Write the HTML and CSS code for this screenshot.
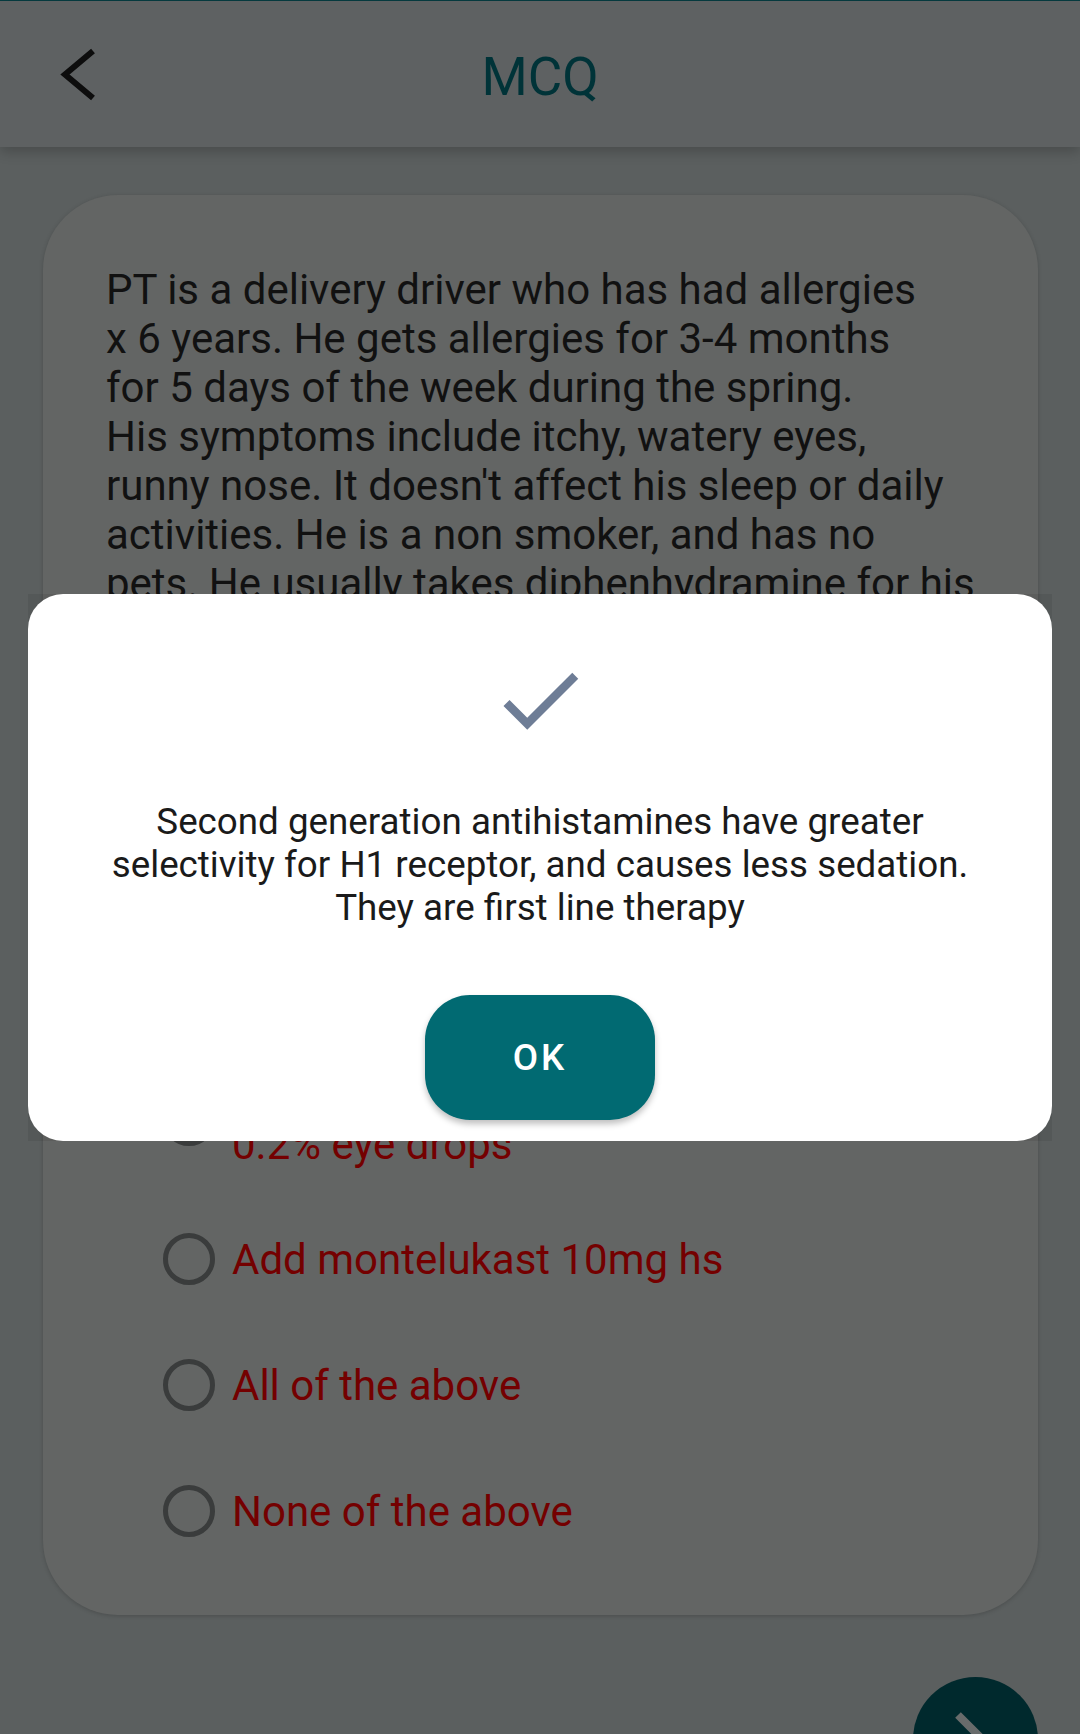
FILE: index.html
```html
<!DOCTYPE html>
<html lang="en">
<head>
<meta charset="utf-8">
<title>MCQ</title>
<link rel="stylesheet" href="styles.css">
</head>
<body>
<div class="screen">
  <div class="status-line"></div>
  <header class="appbar">
    <button class="back" aria-label="Back">
      <svg width="60" height="60" viewBox="0 0 60 60"><polyline points="45,7 17,30.5 45,54" fill="none" stroke="#0d0d0d" stroke-width="6"/></svg>
    </button>
    <h1 class="title">MCQ</h1>
    <span class="spacer"></span>
  </header>

  <main class="content">
    <section class="card">
      <p class="case">PT is a delivery driver who has had allergies<br>x 6 years. He gets allergies for 3-4 months<br>for 5 days of the week during the spring.<br>His symptoms include itchy, watery eyes,<br>runny nose. It doesn't affect his sleep or daily<br>activities. He is a non smoker, and has no<br>pets. He usually takes diphenhydramine for his<br>allergies. What do you recommend?</p>
      <ul class="options">
        <li class="option"><span class="radio"></span><span class="opt-text">Continue diphenhydramine</span></li>
        <li class="option"><span class="radio"></span><span class="opt-text">Switch to loratadine 10mg daily</span></li>
        <li class="option"><span class="radio"></span><span class="opt-text">Add fluticasone nasal spray</span></li>
        <li class="option"><span class="radio"></span><span class="opt-text">Cetirizine 10mg plus olopatadine<br>0.2% eye drops</span></li>
        <li class="option"><span class="radio"></span><span class="opt-text">Add montelukast 10mg hs</span></li>
        <li class="option"><span class="radio"></span><span class="opt-text">All of the above</span></li>
        <li class="option"><span class="radio"></span><span class="opt-text">None of the above</span></li>
      </ul>
    </section>
  </main>

  <button class="fab" aria-label="Next">
    <svg width="125" height="125" viewBox="0 0 125 125"><polyline points="45,38 70,63 45,88" fill="none" stroke="#686b6b" stroke-width="8"/></svg>
  </button>

  <div class="dialog-window">
    <div class="dialog">
      <svg class="check" width="102" height="102" viewBox="0 0 24 24"><path d="M9 16.17L4.83 12l-1.42 1.41L9 19 21 7l-1.41-1.41z" fill="#6e7d96"/></svg>
      <p class="dialog-text">Second generation antihistamines have greater<br>selectivity for H1 receptor, and causes less sedation.<br>They are first line therapy</p>
      <button class="ok">OK</button>
    </div>
  </div>
</div>
</body>
</html>
```

FILE: styles.css
```css
* { box-sizing: border-box; }

html, body {
  margin: 0;
  padding: 0;
  background: #5b5f5f;
}

body {
  font-family: Roboto, "Liberation Sans", sans-serif;
}

.screen {
  position: relative;
  width: 1080px;
  height: 1734px;
  overflow: hidden;
  background: #5b5f5f;
}

.status-line {
  height: 1px;
  background: #063c41;
}

.appbar {
  position: relative;
  z-index: 1;
  height: 146px;
  background: #5e6162;
  display: grid;
  grid-template-columns: 1fr auto 1fr;
  align-items: center;
  padding: 0 48px;
  box-shadow: 0 5px 12px rgba(0, 0, 0, 0.2);
}

.back {
  width: 60px;
  height: 60px;
  padding: 0;
  border: 0;
  background: none;
  display: block;
}

.back svg { display: block; }

.title {
  margin: 0;
  padding-top: 6px;
  font-size: 53px;
  font-weight: 400;
  color: #003338;
  line-height: 60px;
}

.content {
  padding: 48px 42px 0 43px;
}

.card {
  background: #636564;
  border-radius: 75px;
  padding: 70px 40px 41px 63px;
  box-shadow: 0 1px 4px rgba(0, 0, 0, 0.18);
}

.case {
  margin: 0;
  font-size: 42px;
  line-height: 49px;
  color: #111111;
  white-space: nowrap;
}

.options {
  list-style: none;
  margin: 9px 0 0;
  padding: 0 0 0 57px;
}

.option {
  display: flex;
  align-items: center;
  min-height: 126px;
  padding: 27px 0;
}

.radio {
  flex: none;
  width: 52px;
  height: 52px;
  border: 5px solid #3a3c3c;
  border-radius: 50%;
  margin-right: 17px;
}

.opt-text {
  font-size: 42px;
  line-height: 49px;
  color: #740000;
  white-space: nowrap;
}

.fab {
  position: absolute;
  left: 913px;
  top: 1677px;
  width: 125px;
  height: 125px;
  border-radius: 50%;
  border: 0;
  padding: 0;
  background: #00292d;
}

.fab svg { display: block; }

.dialog-window {
  position: absolute;
  left: 28px;
  top: 594px;
  width: 1024px;
  background: rgba(0, 0, 0, 0.07);
}

.dialog {
  background: #ffffff;
  border-radius: 35px;
  padding: 55px 40px 21px;
  display: flex;
  flex-direction: column;
  align-items: center;
}

.check { display: block; }

.dialog-text {
  margin: 49px 0 0;
  font-size: 36.75px;
  line-height: 43px;
  color: #1a1a1a;
  text-align: center;
  white-space: nowrap;
}

.ok {
  margin-top: 66px;
  width: 230px;
  height: 125px;
  border: 0;
  border-radius: 45px;
  background: #016a72;
  color: #ffffff;
  font-family: Roboto, "Liberation Sans", sans-serif;
  font-size: 36.75px;
  font-weight: 500;
  letter-spacing: 3px;
  box-shadow: 0 4px 6px rgba(0, 0, 0, 0.25);
}
```
